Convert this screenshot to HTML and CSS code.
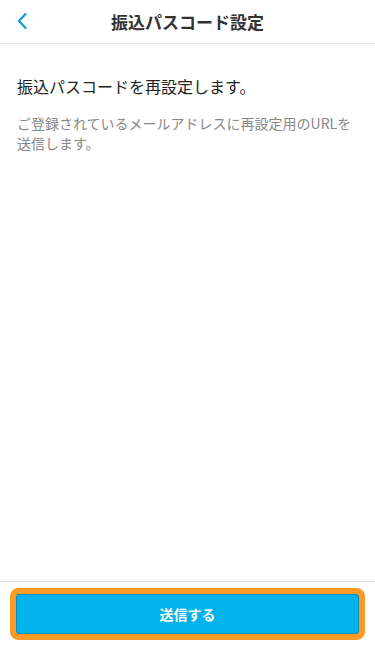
FILE: index.html
```html
<!DOCTYPE html>
<html lang="ja">
<head>
  <meta charset="UTF-8">
  <meta name="viewport" content="width=device-width, initial-scale=1.0">
  <title>振込パスコード設定</title>
  <link rel="stylesheet" href="styles.css">
</head>
<body>
  <div class="app">
    <header class="header">
      <button class="back-btn" aria-label="戻る">
        <svg width="12" height="18" viewBox="0 0 12 18"><path d="M9.5 2 L3 9 L9.5 16" fill="none" stroke="#0a9bd8" stroke-width="2.2" stroke-linecap="round" stroke-linejoin="round"/></svg>
      </button>
      <h1 class="title">振込パスコード設定</h1>
    </header>
    <main class="content">
      <p class="lead">振込パスコードを再設定します。</p>
      <p class="note">ご登録されているメールアドレスに再設定用のURLを送信します。</p>
    </main>
    <footer class="footer">
      <button class="submit-btn">送信する</button>
    </footer>
  </div>
</body>
</html>
```

FILE: styles.css
```css
*{margin:0;padding:0;box-sizing:border-box;}
body{font-family:"Noto Sans CJK JP","Noto Sans",sans-serif;background:#fff;color:#333;}
.app{height:646px;display:flex;flex-direction:column;}
.header{height:44px;flex:none;display:flex;align-items:center;justify-content:center;position:relative;border-bottom:1px solid #e2e2e2;}
.back-btn{position:absolute;left:12px;top:11px;width:20px;height:20px;background:none;border:none;display:flex;align-items:center;justify-content:center;}
.title{font-size:17px;font-weight:700;color:#333;}
.content{flex:1;padding:31px 17px 0;}
.lead{font-size:16px;line-height:22px;color:#222;}
.note{margin-top:16px;font-size:14px;line-height:20px;color:#888;}
.footer{flex:none;border-top:1px solid #e2e2e2;padding:12px 16px 12px;}
.submit-btn{display:block;width:100%;height:40px;background:#02b2ea;border:1px solid #0a8cb8;border-radius:3px;color:#fff;font-family:inherit;font-size:14px;font-weight:700;box-shadow:0 0 0 6px #fb9a26;}
```
